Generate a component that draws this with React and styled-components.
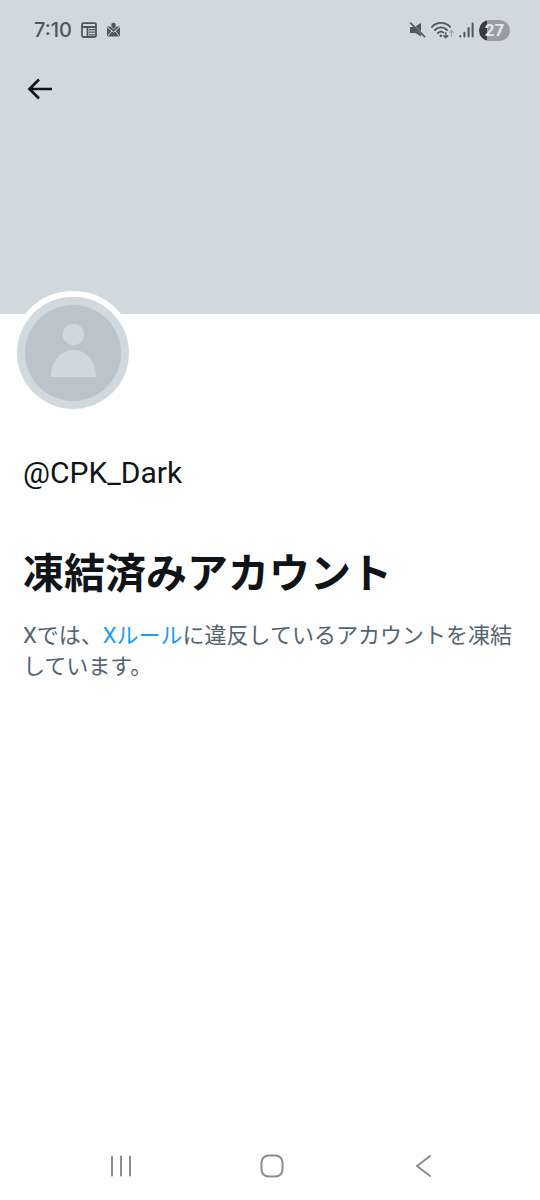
import styled, { createGlobalStyle } from "styled-components";

const GlobalStyle = createGlobalStyle`
  * {
    box-sizing: border-box;
  }

  body {
    margin: 0;
    background: #fefefe;
    font-family: Roboto, "Noto Sans CJK JP", sans-serif;
  }
`;

// 画面全体
const Screen = styled.div`
  display: flex;
  flex-direction: column;
  min-height: 100vh;
`;

const Banner = styled.header`
  height: 314px;
  background: #cfd9de;
`;

// ステータスバー
const StatusBar = styled.div`
  display: flex;
  align-items: center;
  justify-content: space-between;
  height: 60px;
  padding: 0 30px 0 34px;
  color: #50575c;
`;

const StatusGroup = styled.div`
  display: flex;
  align-items: center;
  gap: ${({ $gap }) => $gap}px;
`;

const Clock = styled.time`
  font-family: Inter, sans-serif;
  font-size: 20px;
  font-weight: 500;
  line-height: 24px;
`;

const Battery = styled.span`
  width: 31px;
  height: 21px;
  border-radius: 11px;
  background: linear-gradient(to right, #363b3f 27%, #979da1 27%);
  color: #e2e8eb;
  font-size: 17px;
  font-weight: 700;
  line-height: 21px;
  text-align: center;
`;

const BackButton = styled.button`
  display: flex;
  align-items: center;
  justify-content: center;
  width: 48px;
  height: 48px;
  margin: 5px 0 0 16px;
  padding: 0;
  border: none;
  background: none;
  color: #0f1419;
  cursor: pointer;
`;

// プロフィール
const Profile = styled.main`
  flex: 1;
  padding: 0 23px;
`;

const Avatar = styled.div`
  display: flex;
  width: 124px;
  height: 124px;
  margin: -23px 0 0 -12px;
  border: 6px solid #fefefe;
  border-radius: 50%;
`;

const Handle = styled.p`
  margin: 40px 0 0;
  color: #0f1419;
  font-size: 30px;
  line-height: 36px;
`;

const Title = styled.h1`
  margin: 53px 0 0;
  color: #0f1419;
  font-size: 41px;
  font-weight: 700;
  line-height: 60px;
`;

const Message = styled.p`
  margin: 16px 0 0;
  color: #536471;
  font-size: 22px;
  line-height: 31px;
`;

const RuleLink = styled.a`
  color: #1d9bf0;
  text-decoration: none;
`;

// ナビゲーションバー
const NavBar = styled.nav`
  display: grid;
  grid-template-columns: repeat(3, 1fr);
  height: 68px;
  padding: 0 42px 0 46px;
`;

const NavButton = styled.button`
  display: flex;
  align-items: center;
  justify-content: center;
  padding: 0;
  border: none;
  background: none;
  color: #8c8c8c;
  cursor: pointer;
`;

function NewsIcon() {
  return (
    <svg width="16" height="16" viewBox="0 0 16 16" fill="none" stroke="currentColor" strokeWidth="1.8">
      <rect x="1" y="1.2" width="14" height="13.8" rx="1.4" />
      <path d="M1 5h14M6.500 5v10" />
      <path d="M8 7.6h6M8 10.2h6M8 12.8h6" strokeWidth="1.3" />
    </svg>
  );
}

function MailIcon() {
  return (
    <svg width="15" height="16" viewBox="0 0 15 16">
      <path d="M1 4.500h13v10H1z" fill="currentColor" />
      <circle cx="7.5" cy="3" r="2.3" fill="currentColor" />
      <path d="M1 4.800l6.500 5.400L14 4.800M1.400 14.500l4.400-5.500M13.600 14.500l-4.400-5.500" fill="none" stroke="#cfd9de" strokeWidth="1" />
      <path d="M4.500 4.200l2.300 2.600h1.400l2.300-2.600" fill="none" stroke="#cfd9de" strokeWidth=".7" />
    </svg>
  );
}

function MuteIcon() {
  return (
    <svg width="17" height="16" viewBox="0 0 17 16">
      <path d="M1 5h3.600l7.400 7.400v2.200L6.600 11H1zM6.600 4.400L12 .8v8.800z" fill="currentColor" />
      <path d="M1.600 1.200l14 13.400" stroke="currentColor" strokeWidth="1.7" strokeLinecap="round" />
    </svg>
  );
}

function WifiIcon() {
  return (
    <svg width="23" height="18" viewBox="0 0 23 18" fill="none" stroke="currentColor" strokeLinecap="round" strokeLinejoin="round">
      <path d="M1 5.800c5-5.200 13-5.200 18 0M4 9c3.400-3.500 8.600-3.500 12 0M7 12c1.500-1.500 3.700-1.700 5.400-.4" strokeWidth="1.8" />
      <circle cx="9.800" cy="14.800" r=".9" fill="currentColor" />
      <path d="M14.800 11.600v5M12.800 14.800l2 2 2-2" strokeWidth="1.4" />
      <path d="M20.500 15.200V9.800M18.700 11.400l1.800-1.800 1.800 1.800" strokeWidth="1.2" stroke="#9da5aa" />
    </svg>
  );
}

function SignalIcon() {
  return (
    <svg width="15" height="16" viewBox="0 0 15 16" stroke="currentColor" strokeWidth="2" strokeLinecap="round">
      <path d="M1.200 14v.4M5.400 10.800v3.600M9.600 6v8.400M13.600 1.400v13" />
    </svg>
  );
}

function DefaultAvatar() {
  return (
    <svg width="112" height="112" viewBox="0 0 112 112" role="img" aria-label="プロフィール画像">
      <circle cx="56" cy="56" r="56" fill="#cfd9de" />
      <circle cx="56" cy="56" r="48" fill="#bbc4cb" />
      <circle cx="56.5" cy="37.5" r="10.7" fill="#cfd7df" />
      <path d="M34 80c0-15 9-27 22.500-27S79 65 79 80z" fill="#cfd7df" />
    </svg>
  );
}

export default function App() {
  return (
    <Screen>
      <GlobalStyle />
      <Banner>
        <StatusBar>
          <StatusGroup $gap={9}>
            <Clock>7:10</Clock>
            <NewsIcon />
            <MailIcon />
          </StatusGroup>
          <StatusGroup $gap={5}>
            <MuteIcon />
            <WifiIcon />
            <SignalIcon />
            <Battery>27</Battery>
          </StatusGroup>
        </StatusBar>
        <BackButton aria-label="戻る">
          <svg width="26" height="22" viewBox="0 0 26 22" fill="none" stroke="currentColor" strokeWidth="2.700">
            <path d="M25 11H3M12 1.500L2.500 11l9.500 9.500" />
          </svg>
        </BackButton>
      </Banner>

      <Profile>
        <Avatar>
          <DefaultAvatar />
        </Avatar>
        <Handle>@CPK_Dark</Handle>
        <Title>凍結済みアカウント</Title>
        <Message>
          Xでは、<RuleLink href="#rules">Xルール</RuleLink>に違反しているアカウントを凍結しています。
        </Message>
      </Profile>

      <NavBar>
        <NavButton aria-label="履歴">
          <svg width="22" height="22" viewBox="0 0 22 22" stroke="currentColor" strokeWidth="2" strokeLinecap="round">
            <path d="M2 1.500v19M11 1.500v19M20 1.500v19" />
          </svg>
        </NavButton>
        <NavButton aria-label="ホーム">
          <svg width="24" height="24" viewBox="0 0 24 24" fill="none" stroke="currentColor" strokeWidth="2">
            <rect x="1.500" y="1.500" width="21" height="21" rx="7" />
          </svg>
        </NavButton>
        <NavButton aria-label="前の画面">
          <svg width="16" height="24" viewBox="0 0 16 24" fill="none" stroke="currentColor" strokeWidth="2" strokeLinecap="round" strokeLinejoin="round">
            <path d="M15 2L2 12l13 10" />
          </svg>
        </NavButton>
      </NavBar>
    </Screen>
  );
}
